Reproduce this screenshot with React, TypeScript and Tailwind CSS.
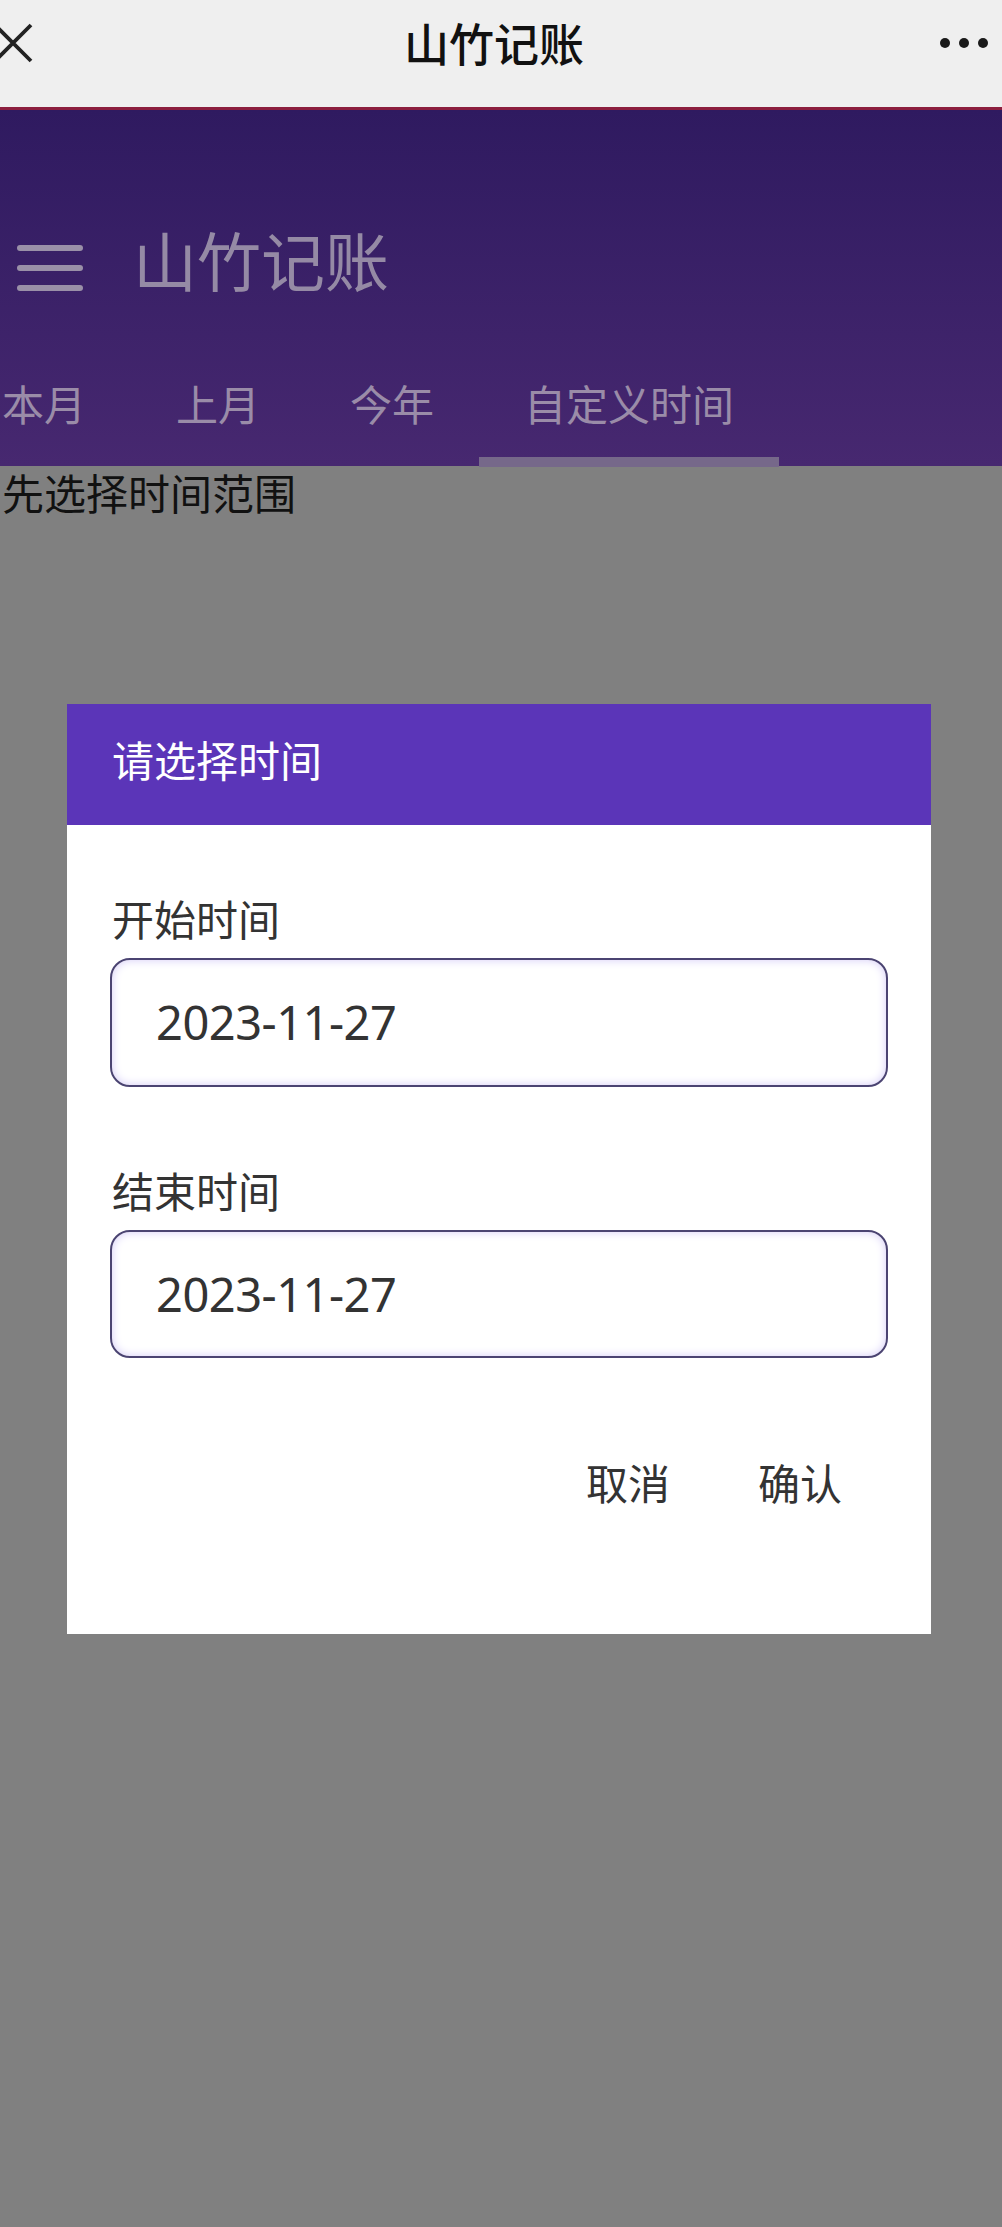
import React from "react";

const cjk = "font-['Noto_Sans_CJK_SC','Noto_Sans',sans-serif]";

export default function App() {
  return (
    <div className={`relative w-[1002px] h-[2227px] overflow-hidden bg-[#808080] ${cjk}`}>
      {/* top bar */}
      <div className="flex h-[110px] items-center border-b-[3px] border-[#8c1e3e] bg-[#efefef] pb-[22px]">
        <svg className="ml-[-7px] shrink-0" width="40" height="40" viewBox="0 0 40 40">
          <path d="M2 2L38 38M38 2L2 38" stroke="#222" strokeWidth="3.8" fill="none" />
        </svg>
        <div className="ml-[371px] text-[45px] leading-none font-medium text-[#111]">山竹记账</div>
        <div className="ml-auto mr-[14px] flex items-center gap-[9px]">
          <span className="block h-[10px] w-[10px] rounded-full bg-[#1a1a1a]" />
          <span className="block h-[10px] w-[10px] rounded-full bg-[#1a1a1a]" />
          <span className="block h-[10px] w-[10px] rounded-full bg-[#1a1a1a]" />
        </div>
      </div>

      {/* app header (dimmed by overlay) */}
      <div className="h-[356px] bg-gradient-to-b from-[#2f1a60] to-[#472870] flex flex-col">
        <div className="mt-[116px] flex items-start">
          <div className="ml-[17px] mt-[19px] flex flex-col gap-[14px]">
            <span className="block h-[6px] w-[66px] rounded-full bg-[#9a90a8]" />
            <span className="block h-[6px] w-[66px] rounded-full bg-[#9a90a8]" />
            <span className="block h-[6px] w-[66px] rounded-full bg-[#9a90a8]" />
          </div>
          <div className="ml-[50px] text-[64px] leading-none text-[#958aa5]">山竹记账</div>
        </div>
        <div className="mt-[91px] ml-[-43px] flex">
          {["本月", "上月", "今年", "自定义时间"].map((t, i) => (
            <div key={t} className="flex h-[85px] flex-col justify-between">
              <div className="px-[45px] text-[42px] leading-none text-[#9a8ca8]">{t}</div>
              <div className={i === 3 ? "h-[10px] bg-[#76688a]" : "h-[10px]"} />
            </div>
          ))}
        </div>
      </div>

      <p className="mt-[5px] ml-[2px] text-[42px] leading-none text-[#111]">先选择时间范围</p>

      {/* dialog */}
      <div className="absolute left-[67px] top-[704px] w-[864px] h-[930px] bg-white flex flex-col">
        <div className="h-[121px] bg-[#5b35b8] pl-[45px] pt-[34px]">
          <div className="text-[42px] leading-none text-white">请选择时间</div>
        </div>
        <div className="flex flex-col px-[43px] pt-[72px]">
          <div className="pl-[2px] text-[42px] leading-none text-[#333]">开始时间</div>
          <div className="mt-[19px] flex h-[129px] items-center rounded-[20px] border-2 border-[#4b4472] pl-[44px] shadow-[inset_0_0_10px_#d4cbf7]">
            <span className="font-['Noto_Sans',sans-serif] text-[47px] leading-none tracking-[-0.5px] text-[#333]">2023-11-27</span>
          </div>
          <div className="mt-[82px] pl-[2px] text-[42px] leading-none text-[#333]">结束时间</div>
          <div className="mt-[19px] flex h-[128px] items-center rounded-[20px] border-2 border-[#4b4472] pl-[44px] shadow-[inset_0_0_10px_#d4cbf7]">
            <span className="font-['Noto_Sans',sans-serif] text-[47px] leading-none tracking-[-0.5px] text-[#333]">2023-11-27</span>
          </div>
          <div className="mt-[103px] flex justify-end gap-[88px] pr-[46px]">
            <span className="text-[42px] leading-none text-[#333]">取消</span>
            <span className="text-[42px] leading-none text-[#333]">确认</span>
          </div>
        </div>
      </div>
    </div>
  );
}
